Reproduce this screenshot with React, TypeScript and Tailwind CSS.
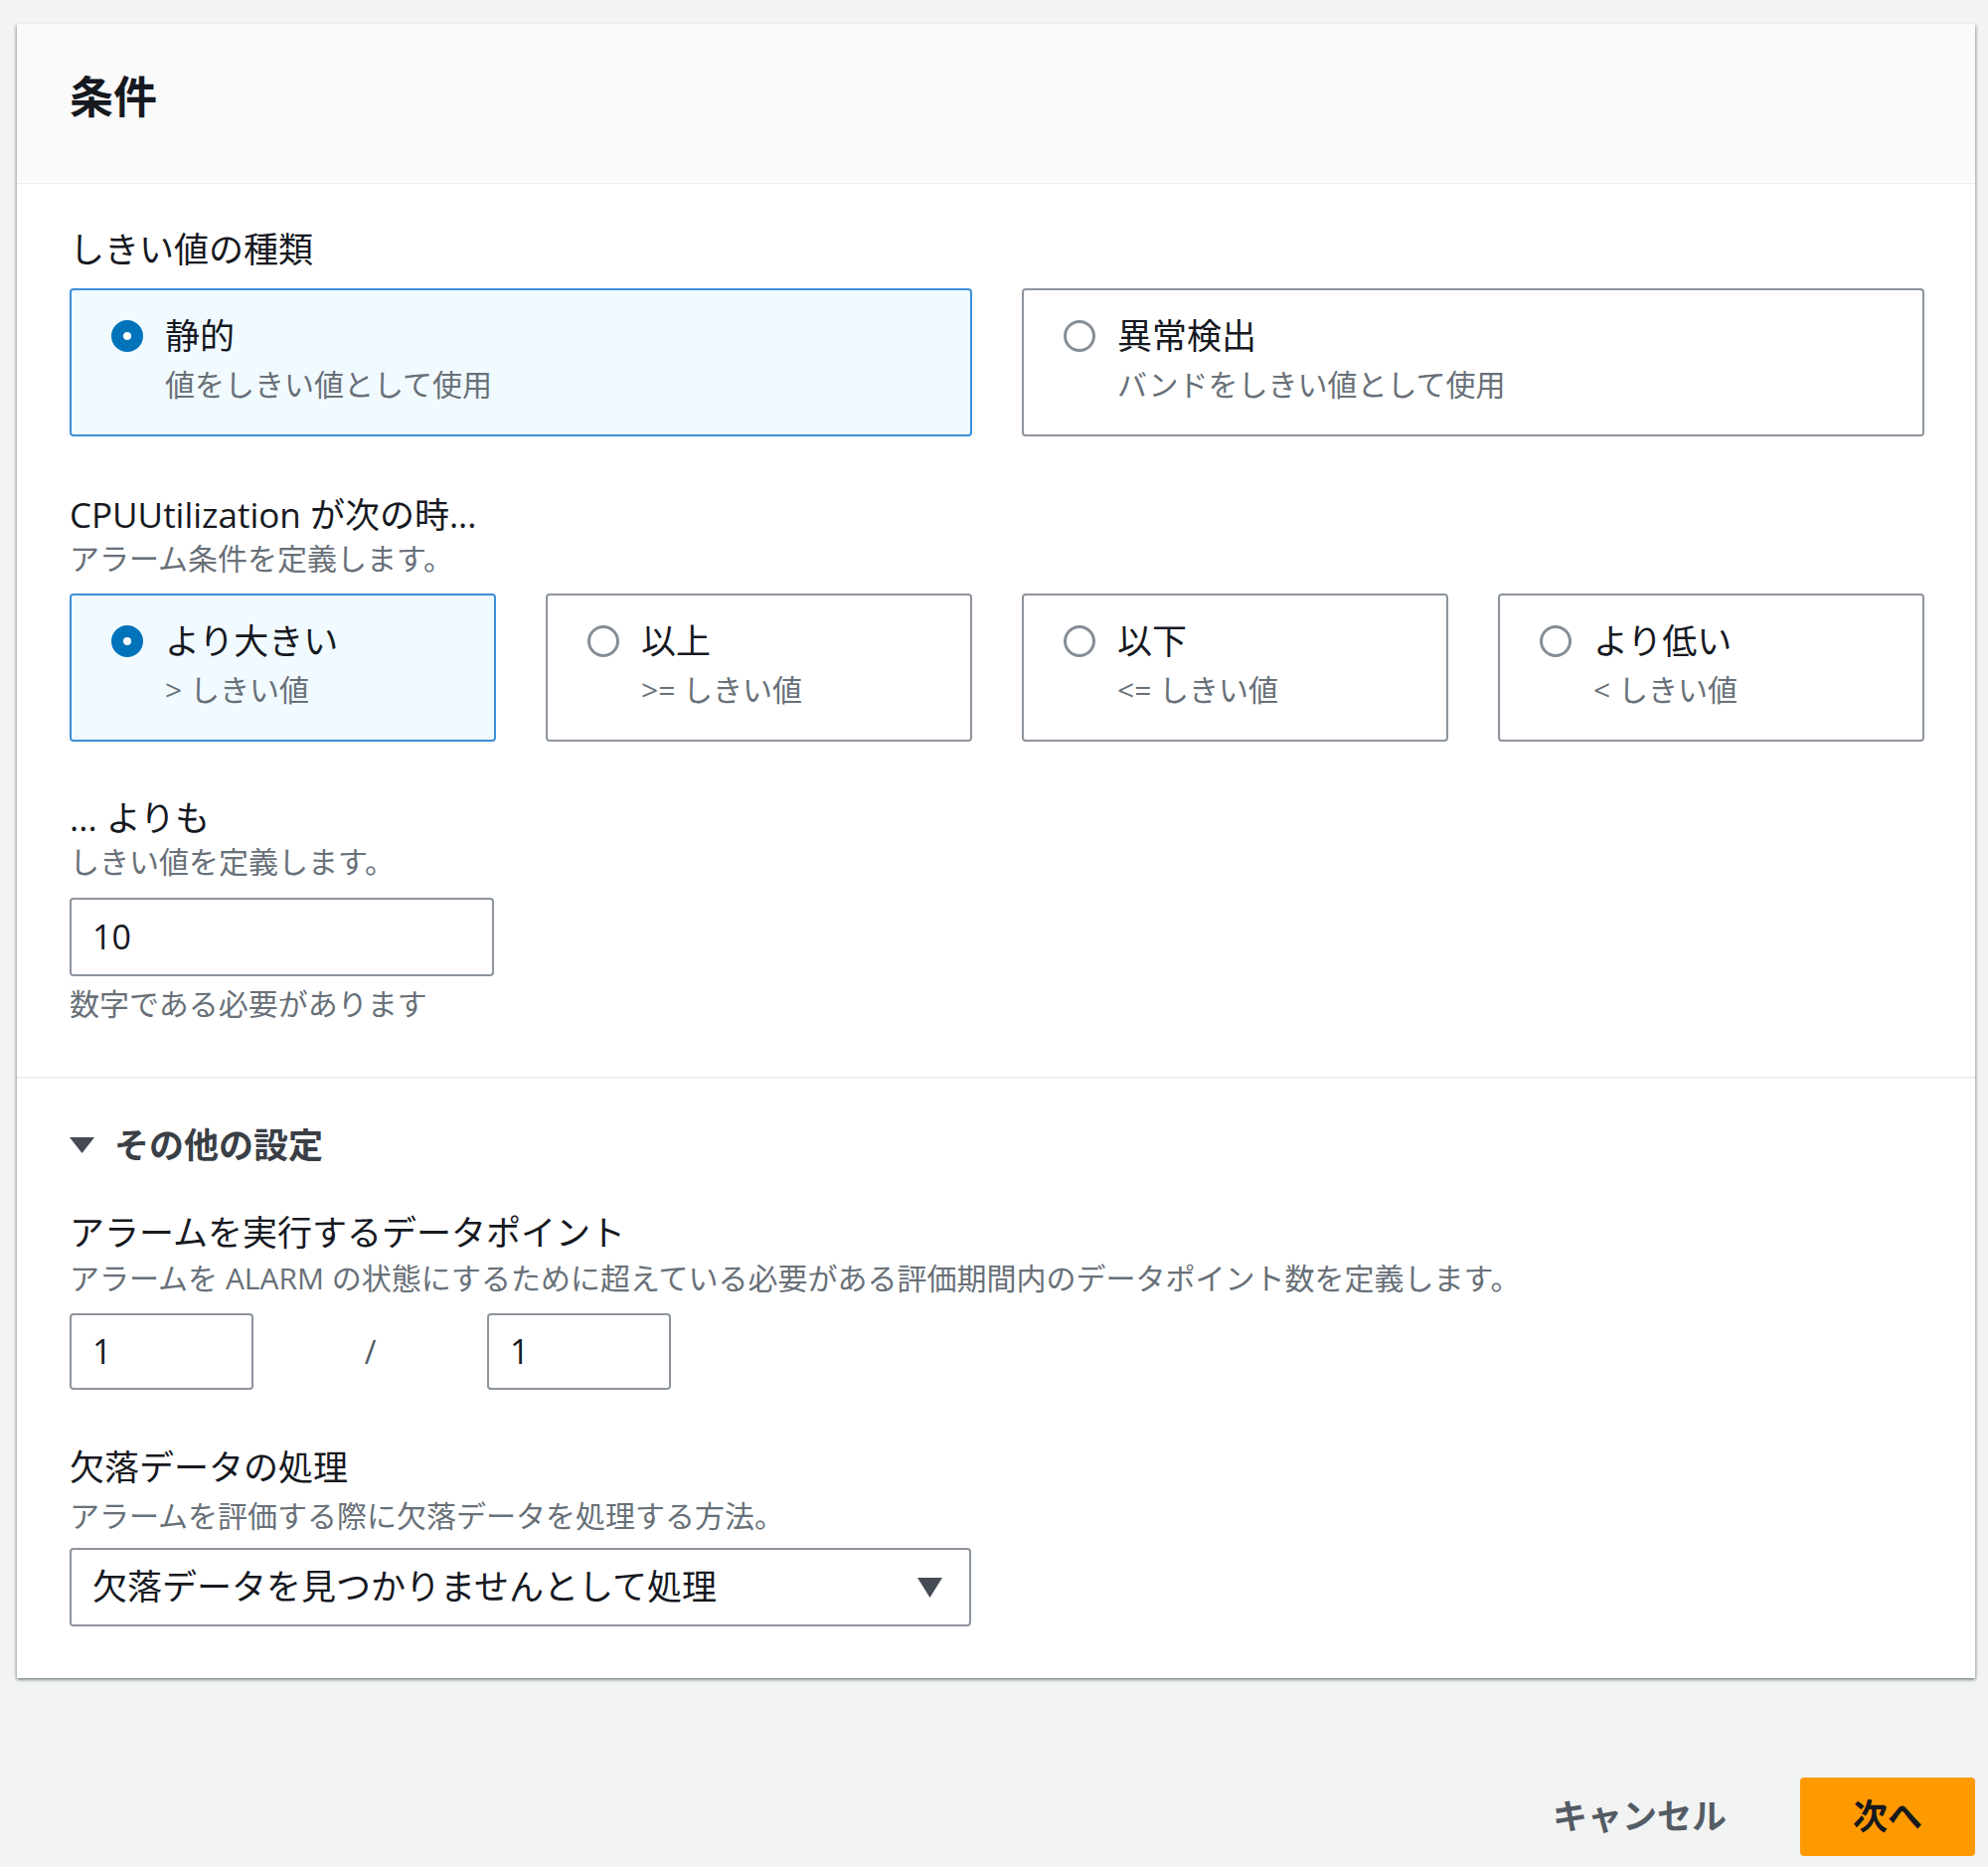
import React from "react";

const FONT = "font-['Open_Sans','Noto_Sans_CJK_JP',sans-serif]";

function Radio({ checked }: { checked: boolean }) {
  return checked ? (
    <span className="block w-[32px] h-[32px] rounded-full border-[12px] border-[#0073bb] bg-white shrink-0" />
  ) : (
    <span className="block w-[32px] h-[32px] rounded-full border-[3px] border-[#858d96] bg-white shrink-0" />
  );
}

function Tile({ checked, title, desc }: { checked: boolean; title: string; desc: string }) {
  return (
    <div
      className={
        checked
          ? "h-[149px] rounded-[4px] border-2 border-[#3b8fd9] bg-[#f1faff] pl-[40px] pt-[22px]"
          : "h-[149px] rounded-[4px] border-2 border-[#8d949c] bg-white pl-[40px] pt-[22px]"
      }
    >
      <div className="flex items-center h-[48px]">
        <Radio checked={checked} />
        <span className="ml-[22px] text-[35px] leading-[48px] text-[#16191f]">{title}</span>
      </div>
      <div className="mt-[5px] pl-[54px] text-[30px] leading-[40px] text-[#687078]">{desc}</div>
    </div>
  );
}

function Label({ children, className = "" }: { children: React.ReactNode; className?: string }) {
  return <div className={"text-[35px] leading-[45px] text-[#16191f] " + className}>{children}</div>;
}

function Desc({ children, className = "" }: { children: React.ReactNode; className?: string }) {
  return <div className={"text-[30px] leading-[40px] text-[#687078] " + className}>{children}</div>;
}

export default function App() {
  return (
    <div className={"min-h-[1878px] w-[2000px] bg-[#f2f3f3] pt-[24px] pl-[17px] pr-[13px] " + FONT}>
      <div className="w-[1970px] bg-white shadow-[0_2px_3px_0_rgba(0,28,36,0.35),2px_1px_2px_0_rgba(0,28,36,0.12),-2px_1px_2px_0_rgba(0,28,36,0.12)]">
        {/* Header */}
        <div className="h-[161px] bg-[#fafafa] border-b border-[#eaeded] pl-[53px] pr-[51px] flex items-center pb-[14px]">
          <h2 className="text-[44px] leading-[56px] font-bold text-[#16191f]">条件</h2>
        </div>

        {/* Section 1 */}
        <div className="pl-[53px] pr-[51px] pt-[43px] pb-[53px] border-b-2 border-[#eef0f0]">
          <Label>しきい値の種類</Label>
          <div className="mt-[17px] grid grid-cols-2 gap-[50px]">
            <Tile checked title="静的" desc="値をしきい値として使用" />
            <Tile checked={false} title="異常検出" desc="バンドをしきい値として使用" />
          </div>

          <Label className="mt-[56px]">CPUUtilization が次の時...</Label>
          <Desc className="mt-[2px]">アラーム条件を定義します。</Desc>
          <div className="mt-[15px] grid grid-cols-4 gap-[50px]">
            <Tile checked title="より大きい" desc="> しきい値" />
            <Tile checked={false} title="以上" desc=">= しきい値" />
            <Tile checked={false} title="以下" desc="<= しきい値" />
            <Tile checked={false} title="より低い" desc="< しきい値" />
          </div>

          <Label className="mt-[54px]">... よりも</Label>
          <Desc className="mt-[2px]">しきい値を定義します。</Desc>
          <div className="mt-[16px] w-[427px] h-[79px] rounded-[4px] border-2 border-[#8d949c] flex items-center pl-[21px] text-[34px] text-[#16191f]">
            10
          </div>
          <Desc className="mt-[8px]">数字である必要があります</Desc>
        </div>

        {/* Section 2 */}
        <div className="pl-[53px] pr-[51px] pt-[44px] pb-[52px]">
          <div className="flex items-center h-[45px]">
            <svg width="25" height="16" viewBox="0 0 25 16" className="shrink-0">
              <polygon points="0,0 25,0 12.5,16" fill="#454b53" />
            </svg>
            <span className="ml-[20px] text-[35px] leading-[45px] font-bold text-[#3a3f46]">その他の設定</span>
          </div>

          <Label className="mt-[43px]">アラームを実行するデータポイント</Label>
          <Desc className="mt-[4px]">アラームを ALARM の状態にするために超えている必要がある評価期間内のデータポイント数を定義します。</Desc>
          <div className="mt-[15px] flex items-center">
            <div className="w-[185px] h-[77px] rounded-[4px] border-2 border-[#8d949c] flex items-center pl-[21px] text-[34px] text-[#16191f]">
              1
            </div>
            <div className="w-[235px] text-center text-[32px] text-[#545b64]">/</div>
            <div className="w-[185px] h-[77px] rounded-[4px] border-2 border-[#8d949c] flex items-center pl-[21px] text-[34px] text-[#16191f]">
              1
            </div>
          </div>

          <Label className="mt-[55px]">欠落データの処理</Label>
          <Desc className="mt-[7px]">アラームを評価する際に欠落データを処理する方法。</Desc>
          <div className="mt-[12px] w-[907px] h-[79px] rounded-[4px] border-2 border-[#8d949c] flex items-center justify-between pl-[21px] pr-[27px]">
            <span className="text-[35px] text-[#16191f]">欠落データを見つかりませんとして処理</span>
            <svg width="25" height="20" viewBox="0 0 25 20" className="shrink-0">
              <polygon points="0,0 25,0 12.5,20" fill="#454b53" />
            </svg>
          </div>
        </div>
      </div>

      {/* Footer */}
      <div className="mt-[100px] flex justify-end items-center">
        <button className="h-[79px] px-[37px] text-[35px] font-bold text-[#545b64]">キャンセル</button>
        <button className="ml-[37px] w-[176px] h-[79px] rounded-[4px] bg-[#ff9900] text-[35px] font-bold text-[#16191f]">
          次へ
        </button>
      </div>
    </div>
  );
}
